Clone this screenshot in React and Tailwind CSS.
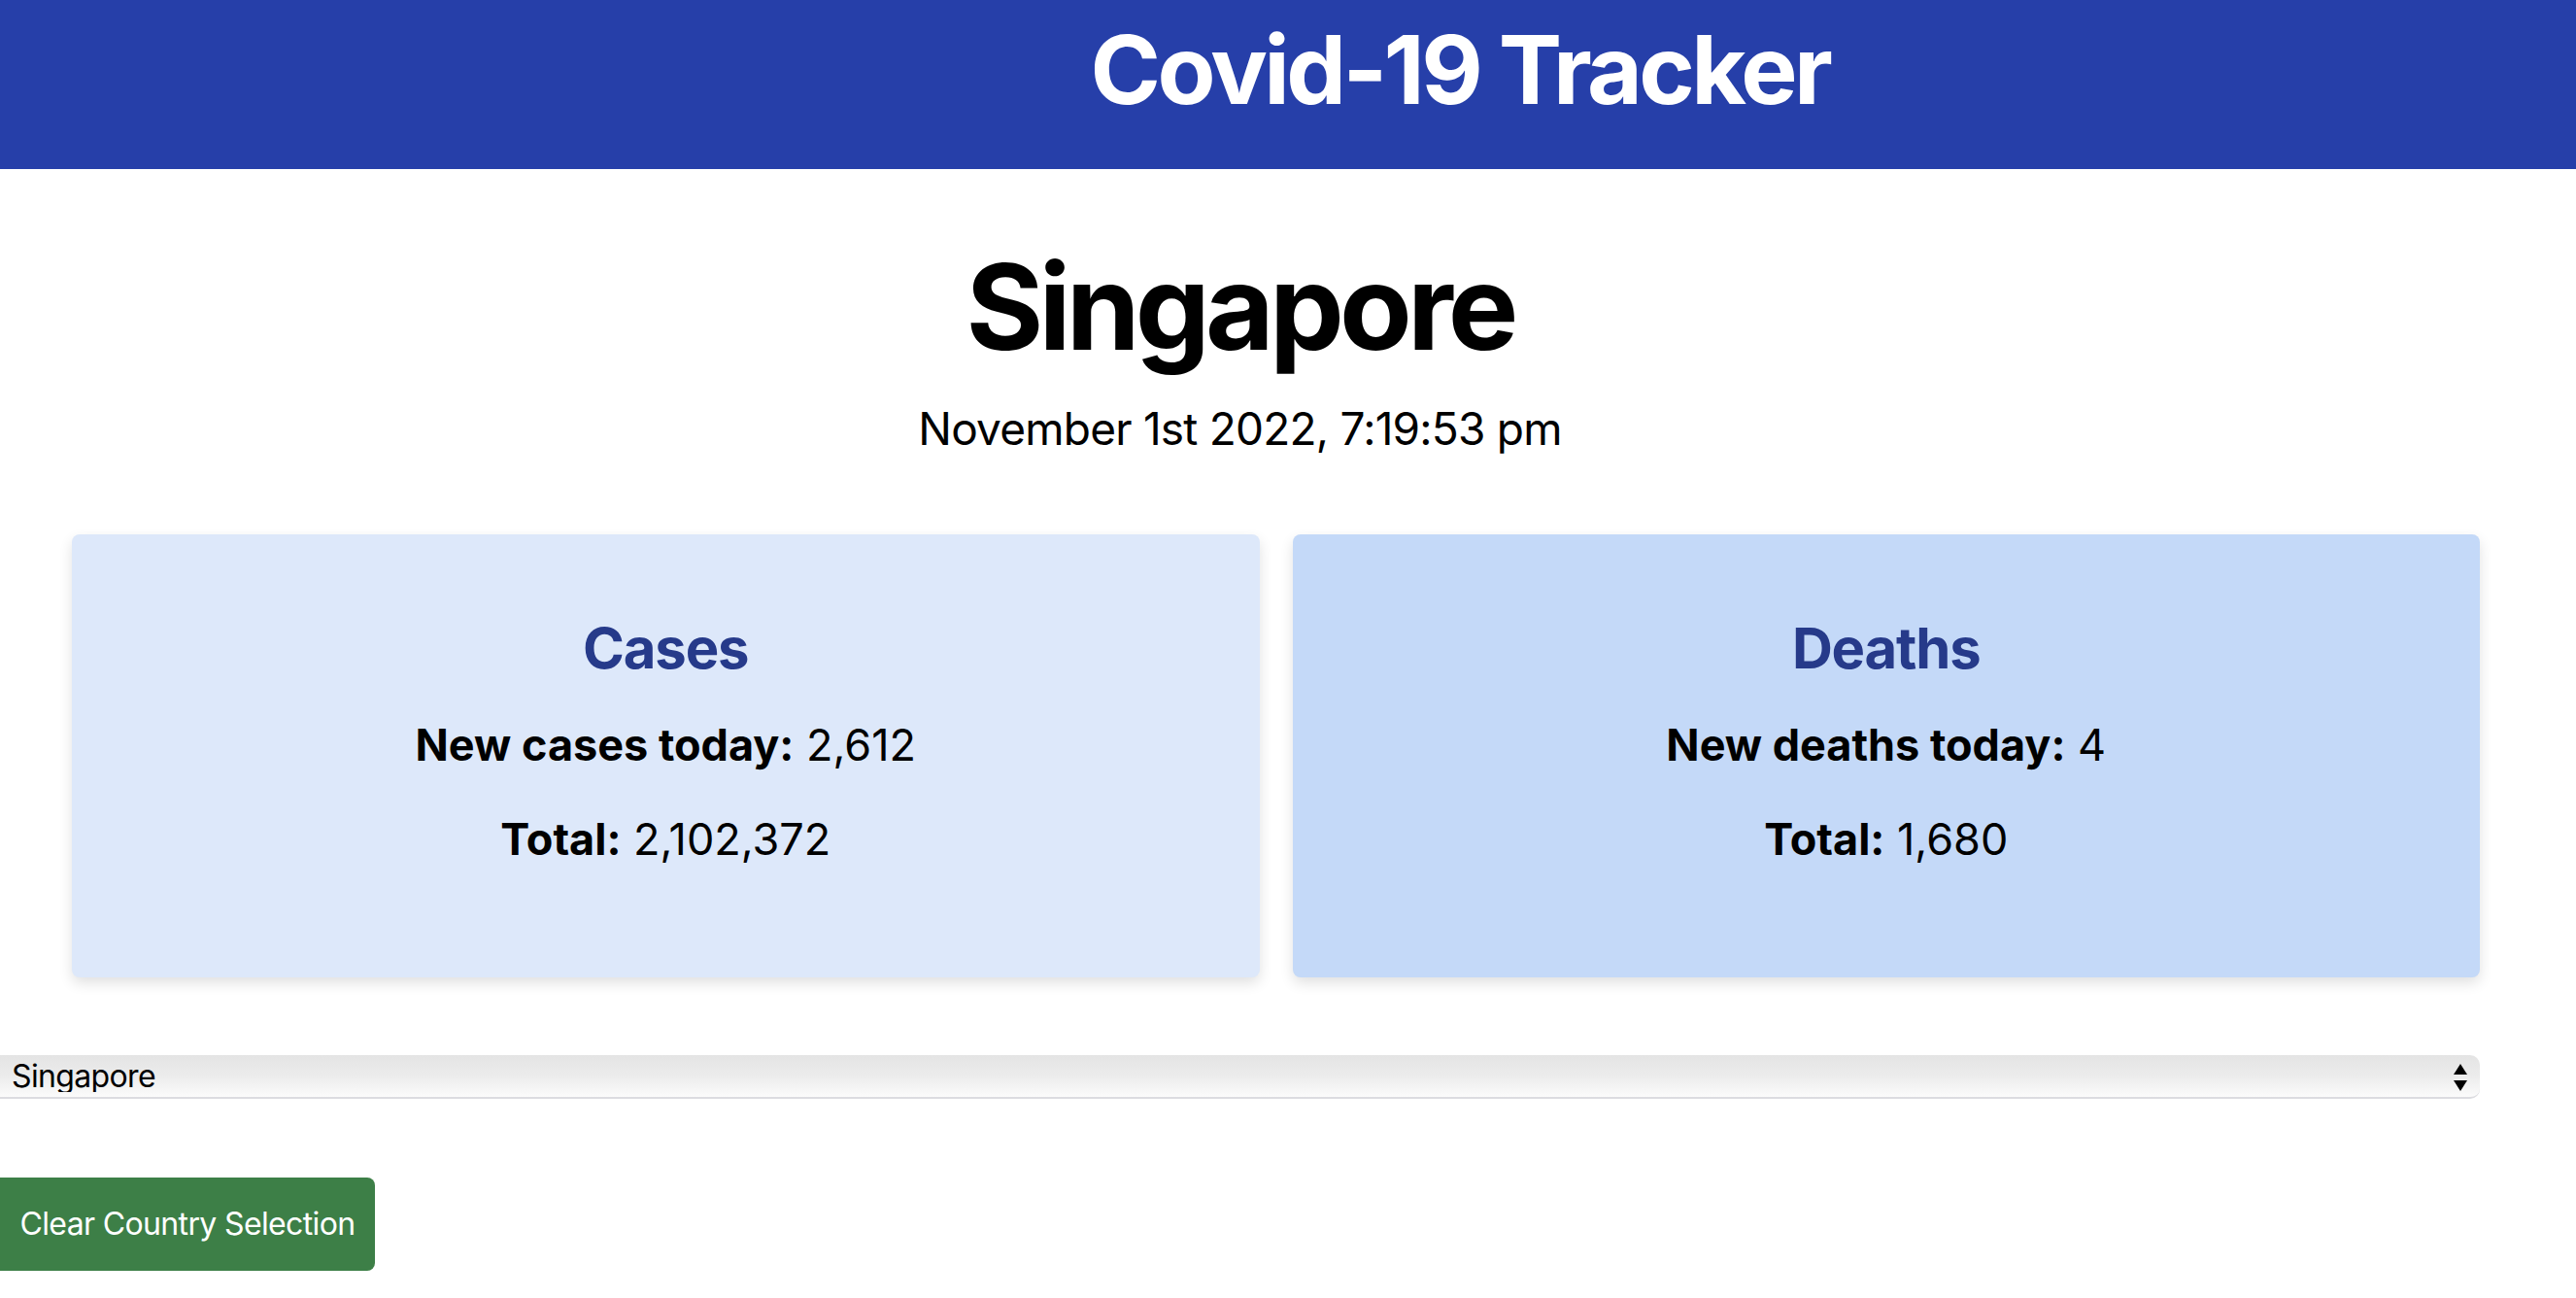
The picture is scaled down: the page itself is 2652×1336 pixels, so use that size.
import React from "react";

export default function App() {
  return (
    <div className="w-[2652px] min-h-[1336px] bg-white text-black" style={{ fontFamily: "Inter, 'Noto Sans', sans-serif" }}>
      <header className="h-[174px] bg-[#263fa9] flex justify-center pl-[354px] pt-[23px]">
        <h1 className="text-[98px] leading-none font-bold text-white tracking-[-0.037em]">Covid-19 Tracker</h1>
      </header>

      <main className="w-[2553px] flex flex-col">
        <h2 className="mt-[81px] text-[122px] leading-none font-bold text-center tracking-[-0.04em]">Singapore</h2>
        <p className="mt-[41px] text-[46px] leading-none text-center tracking-[-0.017em]">November 1st 2022, 7:19:53 pm</p>

        <div className="mt-[86px] pl-[74px] grid grid-cols-2 gap-[34px]">
          <StatCard bg="bg-[#dde8fa]" title="Cases" label="New cases today:" today="2,612" total="2,102,372" />
          <StatCard bg="bg-[#c4d9f8]" title="Deaths" label="New deaths today:" today="4" total="1,680" />
        </div>

        <div className="relative mt-[80px] h-[45px]">
          <select
            defaultValue="Singapore"
            className="appearance-none w-full h-[45px] pl-[12px] text-[32px] leading-none tracking-[-0.02em] rounded-r-[10px] border-b-2 border-[#dcdce0] bg-gradient-to-b from-[#e4e4e4] via-[#ececec] to-[#fbfbfb] text-black outline-none"
            style={{ fontFamily: "Inter, sans-serif" }}
          >
            <option>Singapore</option>
          </select>
          <svg className="absolute right-[12px] top-[9px] pointer-events-none" width="16" height="28" viewBox="0 0 16 28">
            <polygon points="8,0 15,11 1,11" fill="#000" />
            <polygon points="1,17 15,17 8,28" fill="#000" />
          </svg>
        </div>

        <div className="mt-[81px]">
          <button className="h-[96px] w-[386px] bg-[#3d7f47] text-white text-[32px] tracking-[-0.02em] rounded-r-[8px] flex items-center justify-center">
            Clear Country Selection
          </button>
        </div>
      </main>
    </div>
  );
}

function StatCard({ bg, title, label, today, total }) {
  return (
    <div className={`${bg} h-[456px] rounded-[8px] shadow-[0_6px_14px_rgba(0,0,0,0.12)] flex flex-col items-center pt-[88px]`}>
      <h3 className="text-[58px] leading-none font-bold text-[#263a8a] tracking-[-0.02em]">{title}</h3>
      <p className="mt-[48px] text-[45px] leading-none">
        <span className="font-bold">{label}</span> {today}
      </p>
      <p className="mt-[52px] text-[45px] leading-none">
        <span className="font-bold">Total:</span> {total}
      </p>
    </div>
  );
}
